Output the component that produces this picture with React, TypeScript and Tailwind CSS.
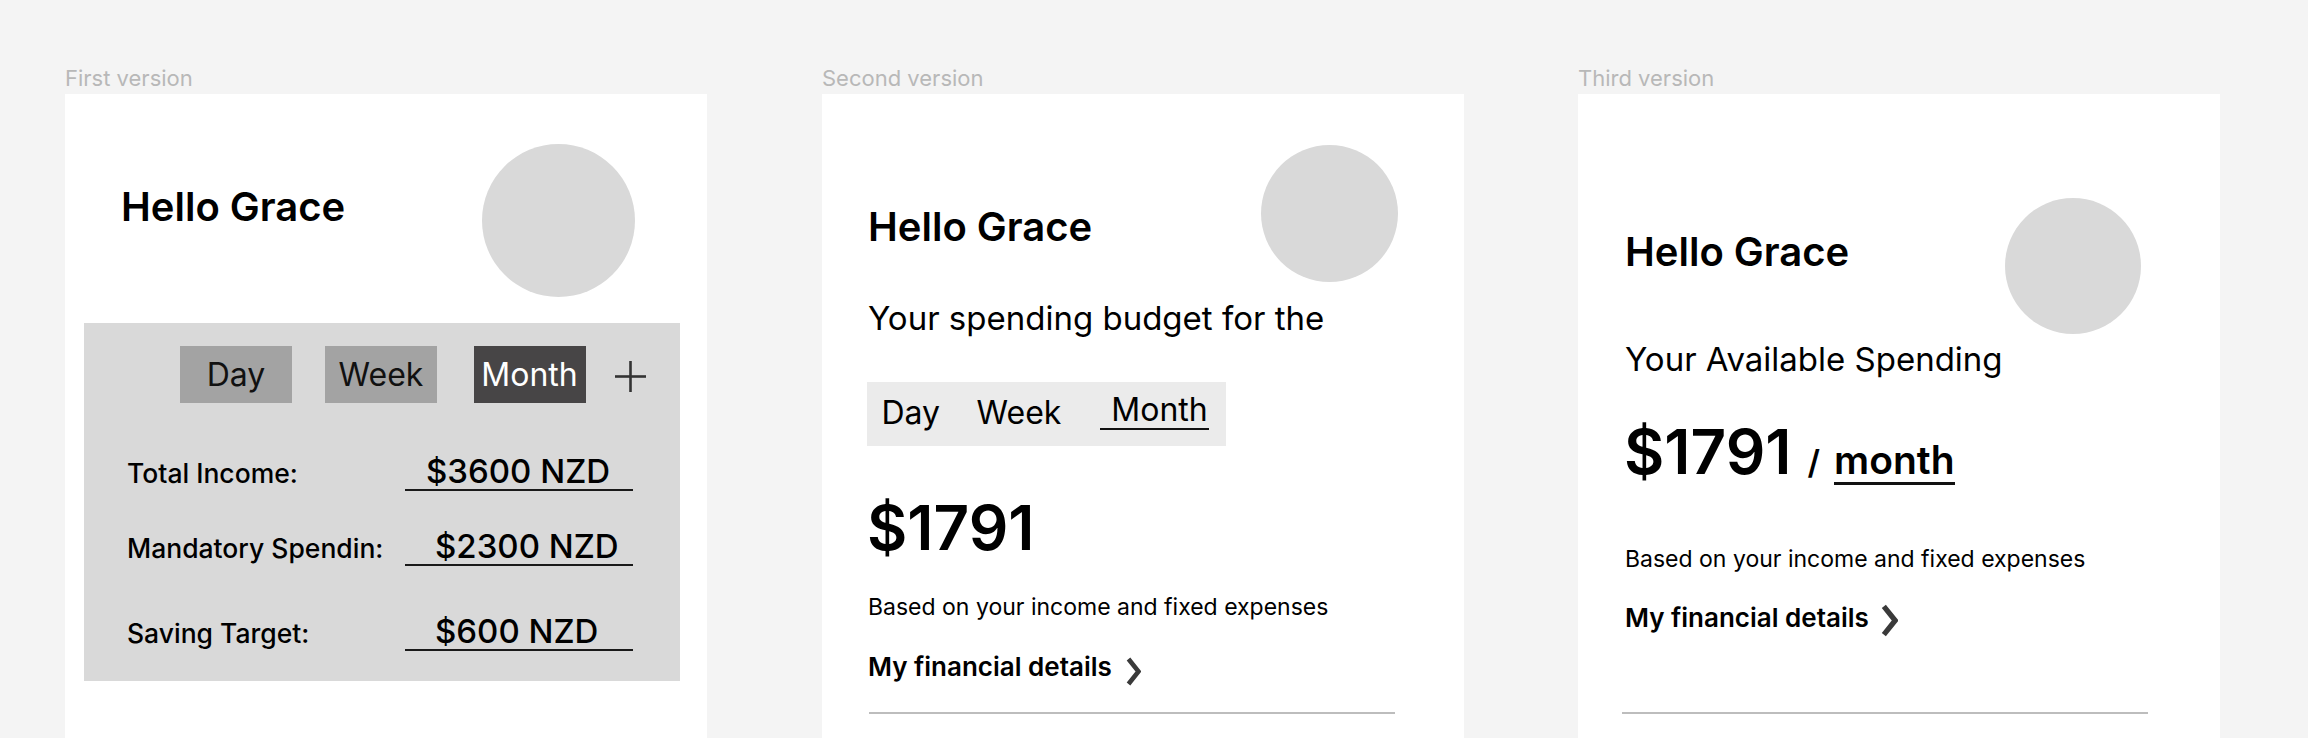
import React from "react";

function Chevron({ className }: { className?: string }) {
  return (
    <svg className={className} viewBox="0 0 15 29" fill="none">
      <polyline points="2.5,2 12.5,14.5 2.5,27" stroke="#3a3a3a" strokeWidth="4.6" strokeLinejoin="miter" />
    </svg>
  );
}

function Plus() {
  return (
    <svg className="ml-[29px] w-[31px] h-[31px] mt-[2px]" viewBox="0 0 31 31" fill="none">
      <line x1="15.5" y1="0" x2="15.5" y2="31" stroke="#333" strokeWidth="2.6" />
      <line x1="0" y1="15.5" x2="31" y2="15.5" stroke="#333" strokeWidth="2.6" />
    </svg>
  );
}

function Label({ children }: { children: React.ReactNode }) {
  return <div className="text-[22px] leading-none h-[22px] text-[#b8b8b8] whitespace-nowrap">{children}</div>;
}

function Row({ label, value, pl, mt }: { label: string; value: string; pl: string; mt: string }) {
  return (
    <div className={`flex items-baseline pl-[43px] ${mt}`}>
      <div className="w-[278px] text-[26.5px] leading-none font-medium whitespace-nowrap">{label}</div>
      <div className={`w-[228px] text-[33px] leading-none font-medium pb-[1px] border-b-2 border-[#1a1a1a] whitespace-nowrap ${pl}`}>
        {value}
      </div>
    </div>
  );
}

function CardOne() {
  return (
    <div className="flex flex-col w-[642px] ml-[65px] pt-[67px]">
      <Label>First version</Label>
      <div className="mt-[5px] bg-white flex-1 flex flex-col">
        <div className="flex items-start">
          <h1 className="ml-[56px] mt-[92.5px] text-[40px] leading-none font-semibold whitespace-nowrap">Hello Grace</h1>
          <div className="ml-auto mr-[72px] mt-[49.5px] w-[153px] h-[153px] rounded-full bg-[#d9d9d9]" />
        </div>
        <div className="ml-[19px] mt-[26.5px] w-[596px] h-[358px] bg-[#d9d9d9] flex flex-col">
          <div className="flex items-start mt-[23px] h-[57px] pl-[96px]">
            <div className="w-[112px] h-[57px] bg-[#a3a3a3] flex items-center justify-center text-[32px] leading-none text-[#111]">Day</div>
            <div className="ml-[33px] w-[112px] h-[57px] bg-[#a3a3a3] flex items-center justify-center text-[32px] leading-none text-[#111]">Week</div>
            <div className="ml-[36.5px] w-[112px] h-[57px] bg-[#474546] flex items-center justify-center text-[32px] leading-none text-white">Month</div>
            <div className="mt-[13px]"><Plus /></div>
          </div>
          <Row label="Total Income:" value="$3600 NZD" pl="pl-[21px]" mt="mt-[51.5px]" />
          <Row label="Mandatory Spendin:" value="$2300 NZD" pl="pl-[30px]" mt="mt-[39px]" />
          <Row label="Saving Target:" value="$600 NZD" pl="pl-[30px]" mt="mt-[49px]" />
        </div>
      </div>
    </div>
  );
}

function CardTwo() {
  return (
    <div className="flex flex-col w-[642px] ml-[115px] pt-[67px]">
      <Label>Second version</Label>
      <div className="mt-[5px] bg-white flex-1 flex flex-col">
        <div className="flex items-start">
          <h1 className="ml-[46px] mt-[112.5px] text-[40px] leading-none font-semibold whitespace-nowrap">Hello Grace</h1>
          <div className="ml-auto mr-[66px] mt-[51px] w-[137px] h-[137px] rounded-full bg-[#d9d9d9]" />
        </div>
        <p className="ml-[46px] mt-[20.3px] text-[33px] leading-none whitespace-nowrap">Your spending budget for the</p>
        <div className="ml-[45px] mt-[47.2px] w-[359px] h-[63.5px] bg-[#ebebeb] flex items-start pl-[14.5px]">
          <span className="mt-[15px] text-[32px] leading-none">Day</span>
          <span className="ml-[36.5px] mt-[15px] text-[32px] leading-none">Week</span>
          <span className="ml-[39px] mt-[11.5px] text-[32px] leading-none pl-[11px] pr-[1px] pb-[2px] border-b-2 border-[#111]">Month</span>
        </div>
        <div className="ml-[45px] mt-[51px] text-[62px] leading-none font-semibold">$1791</div>
        <p className="ml-[46px] mt-[36.6px] text-[23px] leading-none whitespace-nowrap">Based on your income and fixed expenses</p>
        <div className="ml-[46px] mt-[35.2px] flex items-start">
          <span className="text-[26px] leading-none font-semibold whitespace-nowrap">My financial details</span>
          <Chevron className="ml-[14px] mt-[3.5px] w-[15px] h-[29px]" />
        </div>
        <div className="ml-[47px] mt-[25.7px] w-[526px] h-[2px] bg-[#bdbdbd]" />
      </div>
    </div>
  );
}

function CardThree() {
  return (
    <div className="flex flex-col w-[642px] ml-[114px] pt-[67px]">
      <Label>Third version</Label>
      <div className="mt-[5px] bg-white flex-1 flex flex-col">
        <div className="flex items-start">
          <h1 className="ml-[47px] mt-[138px] text-[40px] leading-none font-semibold whitespace-nowrap">Hello Grace</h1>
          <div className="ml-auto mr-[79px] mt-[103.6px] w-[136.5px] h-[136.5px] rounded-full bg-[#d9d9d9]" />
        </div>
        <p className="ml-[47px] mt-[9.2px] text-[33px] leading-none whitespace-nowrap">Your Available Spending</p>
        <div className="ml-[46px] mt-[45.1px] flex items-baseline">
          <span className="text-[62px] leading-none font-semibold">$1791</span>
          <span className="ml-[16px] text-[33px] leading-none font-semibold">/</span>
          <span className="ml-[14px] text-[39px] leading-none font-semibold pb-[3px] border-b-[3px] border-[#111]">month</span>
        </div>
        <p className="ml-[47px] mt-[63px] text-[23px] leading-none whitespace-nowrap">Based on your income and fixed expenses</p>
        <div className="ml-[47px] mt-[33.2px] flex items-start">
          <span className="text-[26px] leading-none font-semibold whitespace-nowrap">My financial details</span>
          <Chevron className="ml-[12px] mt-[-1px] w-[17px] h-[33px]" />
        </div>
        <div className="ml-[44px] mt-[75.4px] w-[526px] h-[2px] bg-[#bdbdbd]" />
      </div>
    </div>
  );
}

export default function App() {
  return (
    <div className="w-[2308px] h-[738px] overflow-hidden bg-[#f4f4f4] flex font-['Inter',sans-serif] text-black">
      <CardOne />
      <CardTwo />
      <CardThree />
    </div>
  );
}
